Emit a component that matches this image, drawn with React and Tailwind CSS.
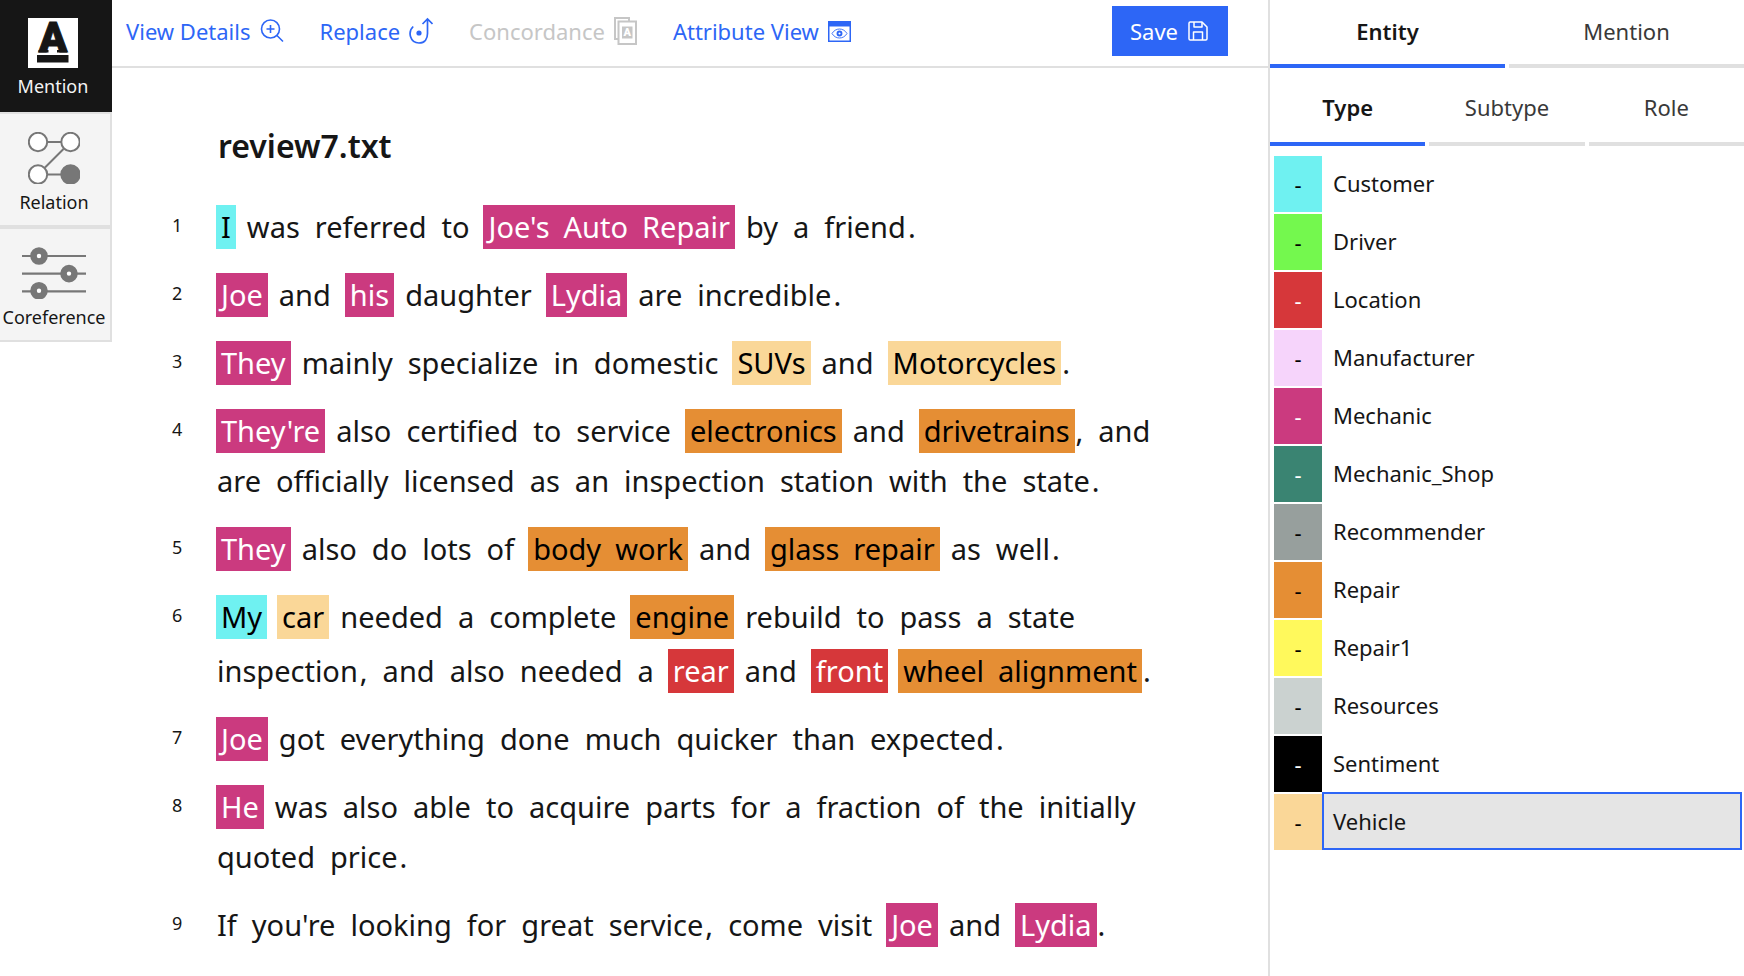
import React, { Fragment } from "react";

const COLORS = {
  customer: "bg-[#6ff1f1] text-black",
  driver: "bg-[#74f84e] text-black",
  location: "bg-[#d6373a] text-white",
  manufacturer: "bg-[#f6d4fb] text-black",
  mechanic: "bg-[#cb3a7f] text-white",
  shop: "bg-[#3a8472] text-white",
  recommender: "bg-[#979f9d] text-black",
  repair: "bg-[#e58e34] text-black",
  repair1: "bg-[#fff95c] text-black",
  resources: "bg-[#cbd2d0] text-black",
  sentiment: "bg-black text-white",
  vehicle: "bg-[#fad798] text-black",
};

const ENTITIES = [
  ["Customer", "customer"],
  ["Driver", "driver"],
  ["Location", "location"],
  ["Manufacturer", "manufacturer"],
  ["Mechanic", "mechanic"],
  ["Mechanic_Shop", "shop"],
  ["Recommender", "recommender"],
  ["Repair", "repair"],
  ["Repair1", "repair1"],
  ["Resources", "resources"],
  ["Sentiment", "sentiment"],
  ["Vehicle", "vehicle"],
];

// A string is plain text; a [text, entity, punctuation] entry is an annotated mention.
const SENTENCES = [
  [["I", "customer"], "was referred to", ["Joe's Auto Repair", "mechanic"], "by a friend."],
  [["Joe", "mechanic"], "and", ["his", "mechanic"], "daughter", ["Lydia", "mechanic"], "are incredible."],
  [["They", "mechanic"], "mainly specialize in domestic", ["SUVs", "vehicle"], "and", ["Motorcycles", "vehicle", "."]],
  [
    ["They're", "mechanic"], "also certified to service", ["electronics", "repair"], "and",
    ["drivetrains", "repair", ","], "and are officially licensed as an inspection station with the state.",
  ],
  [["They", "mechanic"], "also do lots of", ["body work", "repair"], "and", ["glass repair", "repair"], "as well."],
  [
    ["My", "customer"], ["car", "vehicle"], "needed a complete", ["engine", "repair"],
    "rebuild to pass a state inspection, and also needed a", ["rear", "location"], "and",
    ["front", "location"], ["wheel alignment", "repair", "."],
  ],
  [["Joe", "mechanic"], "got everything done much quicker than expected."],
  [["He", "mechanic"], "was also able to acquire parts for a fraction of the initially quoted price."],
  ["If you're looking for great service, come visit", ["Joe", "mechanic"], "and", ["Lydia", "mechanic", "."]],
];

function Word({ text }) {
  const match = text.match(/^(.*?)([.,]?)$/);
  return (
    <span className="flex pr-1 pb-1 pl-px">
      <span>{match[1]}</span>
      {match[2] && <span className="pl-0.5">{match[2]}</span>}
    </span>
  );
}

function Chip({ text, kind, tail }) {
  return (
    <span className="flex">
      <mark className={`flex gap-3.5 px-[5px] py-1 ${COLORS[kind]}`}>
        {text.split(" ").map((word, i) => (
          <Fragment key={i}>
            {i > 0 && " "}
            <span>{word}</span>
          </Fragment>
        ))}
      </mark>
      {tail && <span className="py-1 pr-1 pl-px">{tail}</span>}
    </span>
  );
}

function Sentence({ parts }) {
  return (
    <p className="flex min-w-0 flex-1 flex-wrap items-baseline gap-x-2.5 gap-y-2.5 text-[29px] leading-9">
      {parts.map((part, i) =>
        typeof part === "string" ? (
          part.split(" ").map((word, j) => (
            <Fragment key={`${i}-${j}`}>
              <Word text={word} />{" "}
            </Fragment>
          ))
        ) : (
          <Fragment key={i}>
            <Chip text={part[0]} kind={part[1]} tail={part[2]} />{" "}
          </Fragment>
        )
      )}
    </p>
  );
}

const MentionIcon = () => (
  <svg width="50" height="50" viewBox="0 0 50 50" className="overflow-visible bg-white" aria-hidden="true">
    <text x="25" y="34" textAnchor="middle" fontFamily="Roboto, sans-serif" fontWeight="900" fontSize="42" fill="#161616" stroke="#161616" strokeWidth="1">A</text>
    <path d="M10.500 32h10v2.500h-10zM29 32h10v2.500H29zM9 37h31.500v7.500H9z" fill="#161616" />
  </svg>
);

const RelationIcon = () => (
  <svg width="52" height="52" viewBox="0 0 52 52" fill="none" stroke="#777" strokeWidth="2" aria-hidden="true">
    <path d="M20 10h13M20 42.500h13M17 35.500 35.500 17" />
    <g fill="#fff">
      <circle cx="10" cy="10" r="9.200" />
      <circle cx="42.500" cy="10" r="9.200" />
      <circle cx="10" cy="42.500" r="9.200" />
    </g>
    <circle cx="42.500" cy="42.500" r="9.200" fill="#777" />
  </svg>
);

const CoreferenceIcon = () => (
  <svg width="64" height="52" viewBox="0 0 64 52" aria-hidden="true">
    <path d="M0 9h64M0 26.600h64M0 44.300h64" stroke="#777" strokeWidth="2.200" />
    <g fill="#fff" stroke="#777" strokeWidth="6.600">
      <circle cx="17" cy="9" r="5.500" />
      <circle cx="47" cy="26.600" r="5.500" />
      <circle cx="17" cy="43.800" r="5.500" />
    </g>
  </svg>
);

const ZoomIcon = () => (
  <svg width="24" height="24" viewBox="0 0 24 24" fill="none" stroke="currentColor" strokeWidth="1.600" aria-hidden="true">
    <circle cx="10.500" cy="10" r="9" />
    <path d="M10.500 6v8M6.500 10h8M16.700 16.200 23 22.500" />
  </svg>
);

const ReplaceIcon = () => (
  <svg width="24" height="28" viewBox="0 0 24 28" fill="none" stroke="currentColor" strokeWidth="1.700" aria-hidden="true">
    <path d="M4.200 9.500C-1.500 15 1 26 10 26c6 0 8.500-4.500 8.500-9.500V2M13.500 7l5-5 5 5" />
    <circle cx="10" cy="16" r="2.600" fill="currentColor" stroke="none" />
  </svg>
);

const ConcordanceIcon = () => (
  <svg width="23" height="28" viewBox="0 0 23 28" fill="none" stroke="currentColor" strokeWidth="2" aria-hidden="true">
    <path d="M4 22H1V1h14v3" />
    <rect x="4.500" y="4.500" width="17.500" height="22.500" />
    <rect x="8" y="9.500" width="10.500" height="12" fill="currentColor" stroke="none" />
    <text x="13.200" y="19.300" textAnchor="middle" fontFamily="Roboto, sans-serif" fontWeight="900" fontSize="11" fill="#fff" stroke="none">A</text>
  </svg>
);

const AttributeIcon = () => (
  <svg width="23" height="21" viewBox="0 0 23 21" fill="none" stroke="currentColor" strokeWidth="1.500" aria-hidden="true">
    <rect x="0.750" y="0.750" width="21.500" height="19.500" />
    <path d="M0 0h23v5.500H0z" fill="currentColor" stroke="none" />
    <path d="M4 12.500C7.500 6.500 15.500 6.500 19 12.500C15.500 18.500 7.500 18.500 4 12.500Z" strokeWidth="0.900" />
    <circle cx="11.500" cy="12.500" r="2" strokeWidth="1.900" />
  </svg>
);

const SaveIcon = () => (
  <svg width="20" height="20" viewBox="0 0 20 20" fill="none" stroke="currentColor" strokeWidth="1.500" strokeLinejoin="round" aria-hidden="true">
    <path d="M1 2.200Q1 1 2.200 1H14l5 5v11.800Q19 19 17.800 19H2.200Q1 19 1 17.800Z" />
    <path d="M6 1v5h8V1M5.500 19v-8h9v8" />
  </svg>
);

function SideItem({ icon, label, active }) {
  return (
    <button
      type="button"
      className={
        active
          ? "flex flex-col items-center bg-[#161616] pt-[18px] pr-1.5 pb-3 text-[#f4f4f4]"
          : "flex flex-col items-center border-y-2 border-r-2 border-[#e0e0e0] bg-[#f4f4f4] pt-[18px] pr-0.5 pb-[9px] text-[#161616]"
      }
    >
      {icon}
      <span className="mt-1 text-[18px] leading-7">{label}</span>
    </button>
  );
}

function ToolButton({ children, icon, disabled }) {
  return (
    <button
      type="button"
      disabled={disabled}
      className="flex items-center gap-[9px] text-[#2d66f6] disabled:text-[#c6c6c6]"
    >
      {children}
      {icon}
    </button>
  );
}

function Tab({ children, active, tall }) {
  return (
    <button
      type="button"
      role="tab"
      aria-selected={Boolean(active)}
      className={`flex flex-1 items-center justify-center border-b-4 ${tall ? "h-[78px] pt-1" : "h-[68px] pb-0.5"} ${
        active ? "border-[#2d66f6] font-semibold text-[#161616]" : "border-[#e0e0e0] text-[#393939]"
      }`}
    >
      {children}
    </button>
  );
}

export default function App() {
  return (
    <div className="flex min-h-screen bg-white font-['Noto_Sans',sans-serif] text-[22px] leading-8 text-[#161616]">
      <nav className="flex w-28 shrink-0 flex-col" aria-label="Annotation mode">
        <SideItem icon={<MentionIcon />} label="Mention" active />
        <SideItem icon={<RelationIcon />} label="Relation" />
        <SideItem icon={<CoreferenceIcon />} label="Coreference" />
      </nav>

      <div className="min-w-0 flex-1">
        <header className="flex h-[68px] items-center gap-9 border-b-2 border-[#e0e0e0] pr-10 pb-1 pl-3.5">
          <ToolButton icon={<ZoomIcon />}>View Details</ToolButton>
          <ToolButton icon={<ReplaceIcon />}>Replace</ToolButton>
          <ToolButton icon={<ConcordanceIcon />} disabled>Concordance</ToolButton>
          <ToolButton icon={<AttributeIcon />}>Attribute View</ToolButton>
          <button
            type="button"
            className="ml-auto flex h-[50px] items-center gap-2.5 bg-[#2d66f6] pr-5 pl-[18px] text-white"
          >
            Save
            <SaveIcon />
          </button>
        </header>

        <main className="pr-20 pb-7 pl-15">
          <h1 className="pt-14 pl-[46px] text-[32px] leading-11 font-semibold">review7.txt</h1>
          <ol className="mt-9 flex flex-col gap-6 pt-px">
            {SENTENCES.map((parts, i) => (
              <li key={i} className="flex items-start">
                <span className="w-11 shrink-0 text-[18px] leading-10">{i + 1}</span>
                <Sentence parts={parts} />
              </li>
            ))}
          </ol>
        </main>
      </div>

      <aside className="w-[476px] shrink-0 border-l-2 border-[#e0e0e0]">
        <div role="tablist" className="flex gap-1">
          <Tab active>Entity</Tab>
          <Tab>Mention</Tab>
        </div>
        <div role="tablist" className="flex gap-1">
          <Tab active tall>Type</Tab>
          <Tab tall>Subtype</Tab>
          <Tab tall>Role</Tab>
        </div>
        <ul className="mt-2 pr-0.5 pl-1">
          {ENTITIES.map(([name, kind]) => (
            <li key={name}>
              <button type="button" className="flex h-[58px] w-full text-left">
                <span className={`mt-0.5 flex w-12 items-center justify-center self-stretch ${COLORS[kind]}`}>-</span>
                <span
                  className={`flex flex-1 items-center self-stretch border-2 pl-[9px] ${
                    kind === "vehicle" ? "border-[#2d66f6] bg-[#e5e5e5]" : "border-transparent"
                  }`}
                >
                  {name}
                </span>
              </button>
            </li>
          ))}
        </ul>
      </aside>
    </div>
  );
}
